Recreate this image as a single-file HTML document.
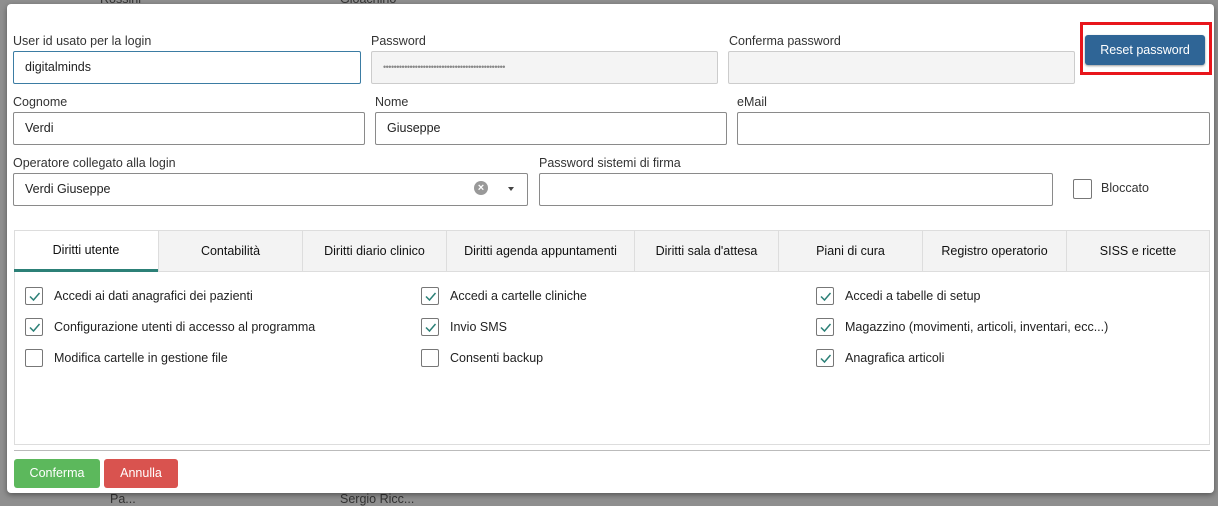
<!DOCTYPE html>
<html><head><meta charset="utf-8"><style>
*{box-sizing:border-box;margin:0;padding:0}
body{width:1218px;height:499px;background:#8f8f8f;font-family:"Liberation Sans",sans-serif;font-size:12.5px;color:#222;position:relative;overflow:hidden}
.bgt{position:absolute;color:#333;font-size:12.5px}
.modal{position:absolute;left:7px;top:4px;width:1207px;height:489px;background:#fff;border-radius:4px;box-shadow:0 2px 6px rgba(0,0,0,.4)}
.a{position:absolute}
.lbl{position:absolute;font-size:12.5px;color:#333;top:0}
.in{position:absolute;height:33px;border:1px solid #8a8a8a;border-radius:2px;background:#fff;padding:0 11px;line-height:31px;font-size:12.5px;color:#222}
.dis{background:#f4f4f4;border-color:#ccc}
.tab{position:absolute;top:226px;height:42px;background:#f3f3f3;border:1px solid #ddd;text-align:center;line-height:40px;font-size:12.5px;color:#111}
.cb{position:absolute;width:18px;height:18px;border:1px solid #777;border-radius:2px;background:#fff}
.cb svg{position:absolute;left:2px;top:2px}
.ct{position:absolute;font-size:12.5px;color:#222}
.btn{position:absolute;height:29px;border-radius:3px;color:#fff;text-align:center;line-height:28px;font-size:12.5px}
</style></head><body>
<div class="bgt" style="left:100px;top:-8px">Rossini</div>
<div class="bgt" style="left:340px;top:-8px">Gioachino</div>
<div class="bgt" style="left:110px;top:492px">Pa...</div>
<div class="bgt" style="left:340px;top:492px">Sergio Ricc...</div>
<div class="modal">
<div class="lbl" style="left:6px;top:30px">User id usato per la login</div>
<div class="in" style="left:6px;top:47px;width:348px;border-color:#3b7ca3">digitalminds</div>
<div class="lbl" style="left:364px;top:30px">Password</div>
<div class="in dis" style="left:364px;top:47px;width:347px;color:#888;font-size:9px;letter-spacing:-0.5px">••••••••••••••••••••••••••••••••••••••••••••••</div>
<div class="lbl" style="left:722px;top:30px">Conferma password</div>
<div class="in dis" style="left:721px;top:47px;width:347px"></div>
<div class="a" style="left:1073px;top:18px;width:132px;height:53px;border:3px solid #e8151b"></div>
<div class="btn" style="left:1078px;top:31px;width:120px;height:30px;background:#2f6596;line-height:30px;box-shadow:0 1px 2px rgba(0,0,0,.4)">Reset password</div>

<div class="lbl" style="left:6px;top:91px">Cognome</div>
<div class="in" style="left:6px;top:108px;width:352px">Verdi</div>
<div class="lbl" style="left:368px;top:91px">Nome</div>
<div class="in" style="left:368px;top:108px;width:352px">Giuseppe</div>
<div class="lbl" style="left:730px;top:91px">eMail</div>
<div class="in" style="left:730px;top:108px;width:473px"></div>

<div class="lbl" style="left:6px;top:152px">Operatore collegato alla login</div>
<div class="in" style="left:6px;top:169px;width:515px">Verdi Giuseppe</div>
<div class="a" style="left:467px;top:177px;width:14px;height:14px;border-radius:50%;background:#999;color:#fff;font-size:11px;line-height:14px;text-align:center;font-weight:bold">×</div>
<div class="a" style="left:501px;top:183px;width:0;height:0;border-left:3.5px solid transparent;border-right:3.5px solid transparent;border-top:4px solid #444"></div>
<div class="lbl" style="left:532px;top:152px">Password sistemi di firma</div>
<div class="in" style="left:532px;top:169px;width:514px"></div>
<div class="a" style="left:1066px;top:175px;width:19px;height:20px;border:1px solid #777;border-radius:2px"></div>
<div class="lbl" style="left:1094px;top:177px">Bloccato</div>

<div class="a" style="left:7px;top:226px;width:1196px;height:215px;border:1px solid #ddd"></div>
<div class="tab" style="left:7px;width:145px;background:#fff;border-bottom:none;border-right:none"></div>
<div class="a" style="left:7px;top:265px;width:144px;height:3px;background:#2c8077"></div>
<div class="a" style="left:7px;top:226px;width:144px;line-height:40px;text-align:center;color:#111">Diritti utente</div>
<div class="tab" style="left:151px;width:145px">Contabilità</div>
<div class="tab" style="left:295px;width:145px">Diritti diario clinico</div>
<div class="tab" style="left:439px;width:189px">Diritti agenda appuntamenti</div>
<div class="tab" style="left:627px;width:145px">Diritti sala d'attesa</div>
<div class="tab" style="left:771px;width:145px">Piani di cura</div>
<div class="tab" style="left:915px;width:145px">Registro operatorio</div>
<div class="tab" style="left:1059px;width:144px">SISS e ricette</div>

<div class="cb" style="left:18px;top:283px"><svg width="13" height="13"><path d="M2 6.5 L5.5 10 L11.5 3" stroke="#2c8077" stroke-width="1.5" fill="none"/></svg></div>
<div class="ct" style="left:47px;top:285px">Accedi ai dati anagrafici dei pazienti</div>
<div class="cb" style="left:18px;top:314px"><svg width="13" height="13"><path d="M2 6.5 L5.5 10 L11.5 3" stroke="#2c8077" stroke-width="1.5" fill="none"/></svg></div>
<div class="ct" style="left:47px;top:316px">Configurazione utenti di accesso al programma</div>
<div class="cb" style="left:18px;top:345px"></div>
<div class="ct" style="left:47px;top:347px">Modifica cartelle in gestione file</div>

<div class="cb" style="left:414px;top:283px"><svg width="13" height="13"><path d="M2 6.5 L5.5 10 L11.5 3" stroke="#2c8077" stroke-width="1.5" fill="none"/></svg></div>
<div class="ct" style="left:443px;top:285px">Accedi a cartelle cliniche</div>
<div class="cb" style="left:414px;top:314px"><svg width="13" height="13"><path d="M2 6.5 L5.5 10 L11.5 3" stroke="#2c8077" stroke-width="1.5" fill="none"/></svg></div>
<div class="ct" style="left:443px;top:316px">Invio SMS</div>
<div class="cb" style="left:414px;top:345px"></div>
<div class="ct" style="left:443px;top:347px">Consenti backup</div>

<div class="cb" style="left:809px;top:283px"><svg width="13" height="13"><path d="M2 6.5 L5.5 10 L11.5 3" stroke="#2c8077" stroke-width="1.5" fill="none"/></svg></div>
<div class="ct" style="left:838px;top:285px">Accedi a tabelle di setup</div>
<div class="cb" style="left:809px;top:314px"><svg width="13" height="13"><path d="M2 6.5 L5.5 10 L11.5 3" stroke="#2c8077" stroke-width="1.5" fill="none"/></svg></div>
<div class="ct" style="left:838px;top:316px">Magazzino (movimenti, articoli, inventari, ecc...)</div>
<div class="cb" style="left:809px;top:345px"><svg width="13" height="13"><path d="M2 6.5 L5.5 10 L11.5 3" stroke="#2c8077" stroke-width="1.5" fill="none"/></svg></div>
<div class="ct" style="left:838px;top:347px">Anagrafica articoli</div>

<div class="a" style="left:7px;top:446px;width:1196px;height:1px;background:#bbb"></div>
<div class="btn" style="left:7px;top:455px;width:86px;background:#5cb85c">Conferma</div>
<div class="btn" style="left:97px;top:455px;width:74px;background:#d9534f">Annulla</div>
</div>
</body></html>
